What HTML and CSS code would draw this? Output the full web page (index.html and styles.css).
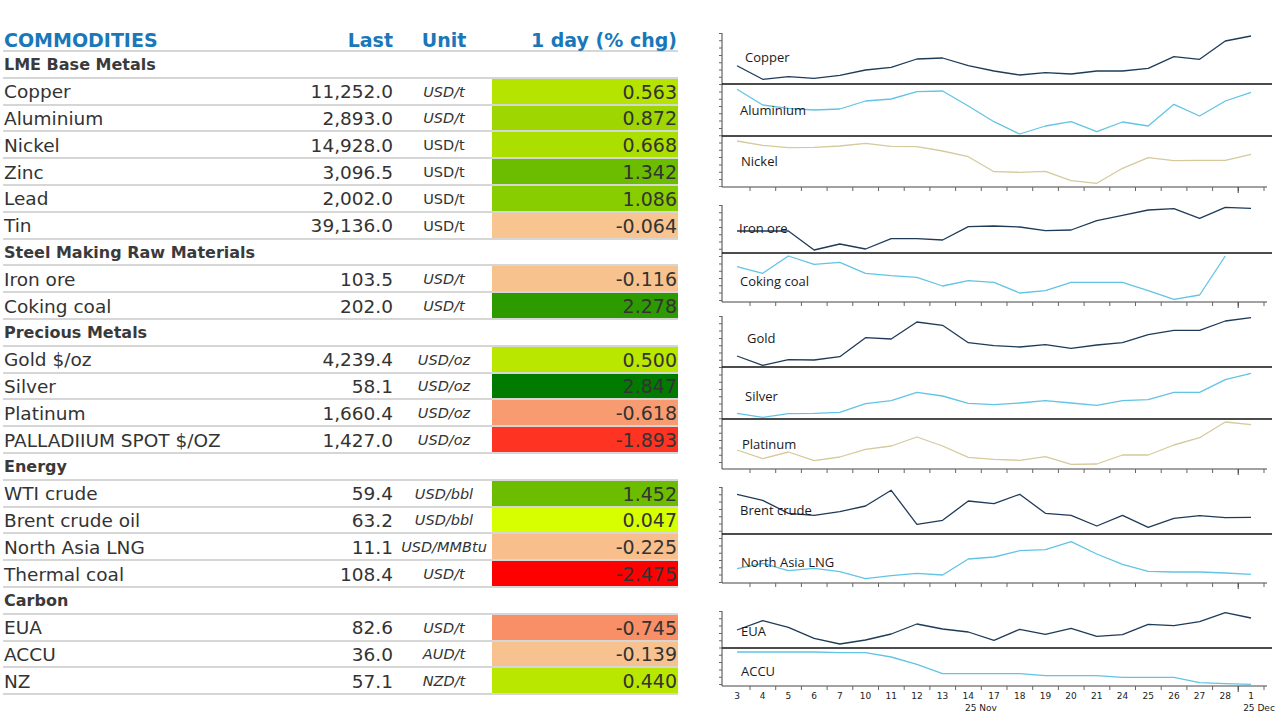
FILE: index.html
```html
<!DOCTYPE html>
<html>
<head>
<meta charset="utf-8">
<link rel="stylesheet" href="styles.css">
</head>
<body>
<div class="page">
  <div class="table">
    <div class="row head">
      <div class="c-name">COMMODITIES</div>
      <div class="c-last">Last</div>
      <div class="c-unit">Unit</div>
      <div class="c-chg">1 day (% chg)</div>
    </div>
    <div class="row section"><div class="c-name">LME Base Metals</div></div>
    <div class="row"><div class="c-name">Copper</div><div class="c-last">11,252.0</div><div class="c-unit it">USD/t</div><div class="c-chg" style="background:#b5e400">0.563</div></div>
    <div class="row"><div class="c-name">Aluminium</div><div class="c-last">2,893.0</div><div class="c-unit it">USD/t</div><div class="c-chg" style="background:#9dd600">0.872</div></div>
    <div class="row"><div class="c-name">Nickel</div><div class="c-last">14,928.0</div><div class="c-unit">USD/t</div><div class="c-chg" style="background:#abdf00">0.668</div></div>
    <div class="row"><div class="c-name">Zinc</div><div class="c-last">3,096.5</div><div class="c-unit">USD/t</div><div class="c-chg" style="background:#6cbd00">1.342</div></div>
    <div class="row"><div class="c-name">Lead</div><div class="c-last">2,002.0</div><div class="c-unit">USD/t</div><div class="c-chg" style="background:#88cd00">1.086</div></div>
    <div class="row"><div class="c-name">Tin</div><div class="c-last">39,136.0</div><div class="c-unit">USD/t</div><div class="c-chg" style="background:#f8c490">-0.064</div></div>
    <div class="row section"><div class="c-name">Steel Making Raw Materials</div></div>
    <div class="row"><div class="c-name">Iron ore</div><div class="c-last">103.5</div><div class="c-unit it">USD/t</div><div class="c-chg" style="background:#f8c28e">-0.116</div></div>
    <div class="row"><div class="c-name">Coking coal</div><div class="c-last">202.0</div><div class="c-unit it">USD/t</div><div class="c-chg" style="background:#2d9a00">2.278</div></div>
    <div class="row section"><div class="c-name">Precious Metals</div></div>
    <div class="row"><div class="c-name">Gold $/oz</div><div class="c-last">4,239.4</div><div class="c-unit it">USD/oz</div><div class="c-chg" style="background:#b9e700">0.500</div></div>
    <div class="row"><div class="c-name">Silver</div><div class="c-last">58.1</div><div class="c-unit it">USD/oz</div><div class="c-chg" style="background:#007b00">2.847</div></div>
    <div class="row"><div class="c-name">Platinum</div><div class="c-last">1,660.4</div><div class="c-unit it">USD/oz</div><div class="c-chg" style="background:#f99b70">-0.618</div></div>
    <div class="row"><div class="c-name">PALLADIIUM SPOT $/OZ</div><div class="c-last">1,427.0</div><div class="c-unit it">USD/oz</div><div class="c-chg" style="background:#ff3322">-1.893</div></div>
    <div class="row section"><div class="c-name">Energy</div></div>
    <div class="row"><div class="c-name">WTI crude</div><div class="c-last">59.4</div><div class="c-unit it">USD/bbl</div><div class="c-chg" style="background:#6cbd00">1.452</div></div>
    <div class="row"><div class="c-name">Brent crude oil</div><div class="c-last">63.2</div><div class="c-unit it">USD/bbl</div><div class="c-chg" style="background:#d8ff00">0.047</div></div>
    <div class="row"><div class="c-name">North Asia LNG</div><div class="c-last">11.1</div><div class="c-unit it">USD/MMBtu</div><div class="c-chg" style="background:#f8bf8c">-0.225</div></div>
    <div class="row"><div class="c-name">Thermal coal</div><div class="c-last">108.4</div><div class="c-unit it">USD/t</div><div class="c-chg" style="background:#ff0000">-2.475</div></div>
    <div class="row section"><div class="c-name">Carbon</div></div>
    <div class="row"><div class="c-name">EUA</div><div class="c-last">82.6</div><div class="c-unit it">USD/t</div><div class="c-chg" style="background:#f98f66">-0.745</div></div>
    <div class="row"><div class="c-name">ACCU</div><div class="c-last">36.0</div><div class="c-unit it">AUD/t</div><div class="c-chg" style="background:#f8c290">-0.139</div></div>
    <div class="row"><div class="c-name">NZ</div><div class="c-last">57.1</div><div class="c-unit it">NZD/t</div><div class="c-chg" style="background:#b9e700">0.440</div></div>
  </div>

  <svg class="charts" width="565" height="700" viewBox="715 20 565 700" xmlns="http://www.w3.org/2000/svg">
    <g class="axis">
      <line x1="722" y1="33" x2="722" y2="187"/>
      <line x1="722" y1="205" x2="722" y2="302"/>
      <line x1="722" y1="316" x2="722" y2="469"/>
      <line x1="722" y1="487" x2="722" y2="583"/>
      <line x1="722" y1="611" x2="722" y2="686"/>
      <line x1="722" y1="187" x2="1267" y2="187"/>
      <line x1="722" y1="302" x2="1267" y2="302"/>
      <line x1="722" y1="469" x2="1267" y2="469"/>
      <line x1="722" y1="583" x2="1267" y2="583"/>
      <line x1="722" y1="686" x2="1267" y2="686"/>
    </g>
    <g class="yticks">
      <line x1="720.5" y1="33" x2="720.5" y2="187"/>
      <line x1="720.5" y1="205" x2="720.5" y2="302"/>
      <line x1="720.5" y1="316" x2="720.5" y2="469"/>
      <line x1="720.5" y1="487" x2="720.5" y2="583"/>
      <line x1="720.5" y1="611" x2="720.5" y2="686"/>
    </g>
    <g class="xticks">
      <line x1="749.5" y1="189" x2="1267" y2="189"/>
      <line x1="749.5" y1="304" x2="1267" y2="304"/>
      <line x1="749.5" y1="471" x2="1267" y2="471"/>
      <line x1="749.5" y1="585" x2="1267" y2="585"/>
      <line x1="749.5" y1="688" x2="1267" y2="688"/>
    </g>
    <g class="major">
      <line x1="1238.2" y1="187" x2="1238.2" y2="193"/>
      <line x1="1238.2" y1="302" x2="1238.2" y2="308"/>
      <line x1="1238.2" y1="469" x2="1238.2" y2="475"/>
      <line x1="1238.2" y1="583" x2="1238.2" y2="589"/>
      <line x1="1238.2" y1="686" x2="1238.2" y2="692"/>
    </g>
    <g class="sep">
      <line x1="722" y1="84" x2="1272" y2="84"/>
      <line x1="722" y1="136" x2="1272" y2="136"/>
      <line x1="722" y1="253" x2="1272" y2="253"/>
      <line x1="722" y1="367" x2="1272" y2="367"/>
      <line x1="722" y1="419" x2="1272" y2="419"/>
      <line x1="722" y1="534" x2="1272" y2="534"/>
      <line x1="722" y1="648" x2="1272" y2="648"/>
    </g>

    <polyline class="navy" points="737,65.7 762.7,79.3 788.4,76.7 814.1,78.3 839.8,75.3 865.5,70 891.2,67.3 916.9,59 942.6,58 968.3,65.7 994,71 1019.7,75 1045.4,72.7 1071.1,74 1096.8,71 1122.5,71 1148.2,68.3 1173.9,56.7 1199.6,59.3 1225.3,41 1251,36"/>
    <polyline class="blue" points="737,89.3 762.7,105 788.4,108.3 814.1,110 839.8,109 865.5,101 891.2,99 916.9,91.7 942.6,91 968.3,106 994,121.7 1019.7,134 1045.4,126 1071.1,121.7 1096.8,131.7 1122.5,122 1148.2,126 1173.9,104.3 1199.6,116 1225.3,101 1251,92.3"/>
    <polyline class="khaki" points="737,141 762.7,145.3 788.4,147.7 814.1,147.3 839.8,146 865.5,143.3 891.2,146.3 916.9,146.7 942.6,151 968.3,156.7 994,171.7 1019.7,172.3 1045.4,171.3 1071.1,180.7 1096.8,183.3 1122.5,168.3 1148.2,157.7 1173.9,160.7 1199.6,160.3 1225.3,160.3 1251,154.3"/>
    <polyline class="navy" points="737,231 762.7,231 788.4,231 814.1,250 839.8,244 865.5,249 891.2,238.7 916.9,238.7 942.6,240 968.3,226.7 994,226 1019.7,227 1045.4,230.7 1071.1,230 1096.8,220.7 1122.5,215.3 1148.2,210 1173.9,208.7 1199.6,218.3 1225.3,207.3 1251,208.3"/>
    <polyline class="blue" points="737,266.7 762.7,273.3 788.4,256 814.1,264.3 839.8,262.3 865.5,273.3 891.2,275.7 916.9,277.3 942.6,286 968.3,280.7 994,282.3 1019.7,293 1045.4,290.7 1071.1,282.3 1096.8,282.3 1122.5,282.3 1148.2,290.7 1173.9,299.3 1199.6,295 1225.3,256"/>
    <polyline class="navy" points="737,356 762.7,365.3 788.4,359.7 814.1,360 839.8,356.7 865.5,337.7 891.2,339 916.9,322 942.6,325.3 968.3,342.7 994,345.7 1019.7,347 1045.4,344.7 1071.1,348.3 1096.8,345 1122.5,342.7 1148.2,334.7 1173.9,330.3 1199.6,330.3 1225.3,321 1251,317.7"/>
    <polyline class="blue" points="737,413.3 762.7,417.3 788.4,413.7 814.1,413.3 839.8,412.3 865.5,403.7 891.2,400.7 916.9,392.3 942.6,396 968.3,403.3 994,404.7 1019.7,403 1045.4,400.7 1071.1,403 1096.8,405.3 1122.5,400.7 1148.2,399.7 1173.9,392.3 1199.6,392.3 1225.3,379.7 1251,373.3"/>
    <polyline class="khaki" points="737,450 762.7,458.7 788.4,452 814.1,460.7 839.8,457 865.5,449.3 891.2,446 916.9,437 942.6,446 968.3,457.3 994,459.3 1019.7,460.3 1045.4,456.7 1071.1,464.3 1096.8,464 1122.5,455 1148.2,455 1173.9,445 1199.6,437.7 1225.3,422 1251,424.7"/>
    <polyline class="navy" points="737,494.3 762.7,500.3 788.4,513.3 814.1,515.3 839.8,511.7 865.5,506 891.2,490.3 916.9,524.3 942.6,520.3 968.3,501 994,503.7 1019.7,494.3 1045.4,513.3 1071.1,515.3 1096.8,526 1122.5,515.3 1148.2,527.3 1173.9,518.3 1199.6,515.7 1225.3,517.7 1251,517.3"/>
    <polyline class="blue" points="737,568.7 762.7,563.3 788.4,570.7 814.1,568.3 839.8,571.7 865.5,578.7 891.2,575.7 916.9,573.3 942.6,575 968.3,559 994,557 1019.7,550.7 1045.4,549.7 1071.1,541.7 1096.8,554 1122.5,564.3 1148.2,571.3 1173.9,572 1199.6,572 1225.3,573 1251,574.3"/>
    <polyline class="navy" points="737,630 762.7,620.7 788.4,627.3 814.1,638.3 839.8,644 865.5,640 891.2,634 916.9,624 942.6,629 968.3,632 994,640.3 1019.7,629.3 1045.4,634.3 1071.1,628.3 1096.8,636.3 1122.5,634.7 1148.2,624.3 1173.9,625.7 1199.6,621.7 1225.3,612.7 1251,618"/>
    <polyline class="blue" points="737,652 762.7,652 788.4,652 814.1,652 839.8,652.7 865.5,652.7 891.2,657 916.9,664.3 942.6,673.7 968.3,673.7 994,673.7 1019.7,673.7 1045.4,675.7 1071.1,675.7 1096.8,675.7 1122.5,677.3 1148.2,677.3 1173.9,677.3 1199.6,682.7 1225.3,683.7 1251,684.3"/>

    <g class="lbl">
      <text x="745" y="61.5">Copper</text>
      <text x="740" y="114.5">Aluminium</text>
      <text x="741" y="165.5">Nickel</text>
      <text x="739" y="232.5">Iron ore</text>
      <text x="740" y="285.5">Coking coal</text>
      <text x="747" y="342.5">Gold</text>
      <text x="745" y="400.5">Silver</text>
      <text x="742" y="448.5">Platinum</text>
      <text x="740" y="514.5">Brent crude</text>
      <text x="741" y="566.5">North Asia LNG</text>
      <text x="741" y="635.5">EUA</text>
      <text x="741" y="675.5">ACCU</text>
    </g>
    <g class="xl">
      <text x="737" y="699">3</text>
      <text x="762.7" y="699">4</text>
      <text x="788.4" y="699">5</text>
      <text x="814.1" y="699">6</text>
      <text x="839.8" y="699">7</text>
      <text x="865.5" y="699">10</text>
      <text x="891.2" y="699">11</text>
      <text x="916.9" y="699">12</text>
      <text x="942.6" y="699">13</text>
      <text x="968.3" y="699">14</text>
      <text x="994" y="699">17</text>
      <text x="1019.7" y="699">18</text>
      <text x="1045.4" y="699">19</text>
      <text x="1071.1" y="699">20</text>
      <text x="1096.8" y="699">21</text>
      <text x="1122.5" y="699">24</text>
      <text x="1148.2" y="699">25</text>
      <text x="1173.9" y="699">26</text>
      <text x="1199.6" y="699">27</text>
      <text x="1225.3" y="699">28</text>
      <text x="1251" y="699">1</text>
      <text x="981" y="711">25 Nov</text>
      <text x="1259" y="711">25 Dec</text>
    </g>
  </svg>
</div>
</body>
</html>
```

FILE: styles.css
```css
html, body {
  margin: 0;
  padding: 0;
  background: #ffffff;
}

.page {
  display: flex;
  align-items: flex-start;
  width: 1280px;
  height: 720px;
  overflow: hidden;
}

.table {
  margin-left: 3px;
  margin-top: 26px;
  width: 675px;
  font-family: "DejaVu Sans", Verdana, sans-serif;
  color: #333333;
}

.row {
  display: grid;
  grid-template-columns: 297px 96px 96px 186px;
  height: 26.8px;
  box-sizing: border-box;
  border-bottom: 2px solid #d6d6d6;
  font-size: 18.5px;
}

.row > div {
  display: flex;
  align-items: center;
  white-space: nowrap;
  padding-top: 1px;
}

.row.head {
  height: 26px;
  color: #1a78b9;
  font-weight: bold;
  font-size: 19px;
}

.row.head > div {
  padding-top: 3px;
}

.row.section .c-name {
  font-weight: bold;
  font-size: 16px;
  color: #3a3a3a;
}

.c-name {
  padding-left: 1px;
}

.c-last {
  justify-content: flex-end;
  padding-right: 3px;
}

.c-unit {
  justify-content: center;
  font-size: 14.5px;
}

.head .c-unit {
  font-size: 19px;
}

.c-unit.it {
  font-style: italic;
}

.c-chg {
  justify-content: flex-end;
  padding-right: 1px;
  font-size: 19px;
}

.head .c-chg {
  padding-right: 1px;
}

.charts {
  display: block;
  margin-left: 37px;
  margin-top: 20px;
  flex: none;
}

.axis line {
  stroke: #444444;
  stroke-width: 1;
}

.yticks line {
  stroke: #666666;
  stroke-width: 3;
  stroke-dasharray: 1 6.3;
}

.xticks line {
  stroke: #666666;
  stroke-width: 4;
  stroke-dasharray: 1 24.7;
}

.major line {
  stroke: #444444;
  stroke-width: 1;
}

.sep line {
  stroke: #111111;
  stroke-width: 1.6;
}

polyline {
  fill: none;
  stroke-width: 1.3;
  stroke-linejoin: round;
}

.navy { stroke: #1e3b58; }
.blue { stroke: #62c4e4; }
.khaki { stroke: #d6c99b; }

.lbl text {
  font-family: "Open Sans", sans-serif;
  font-size: 13px;
  fill: #1a1a1a;
}

.xl text {
  font-family: "DejaVu Sans", Verdana, sans-serif;
  font-size: 9px;
  fill: #222222;
  text-anchor: middle;
}
```
